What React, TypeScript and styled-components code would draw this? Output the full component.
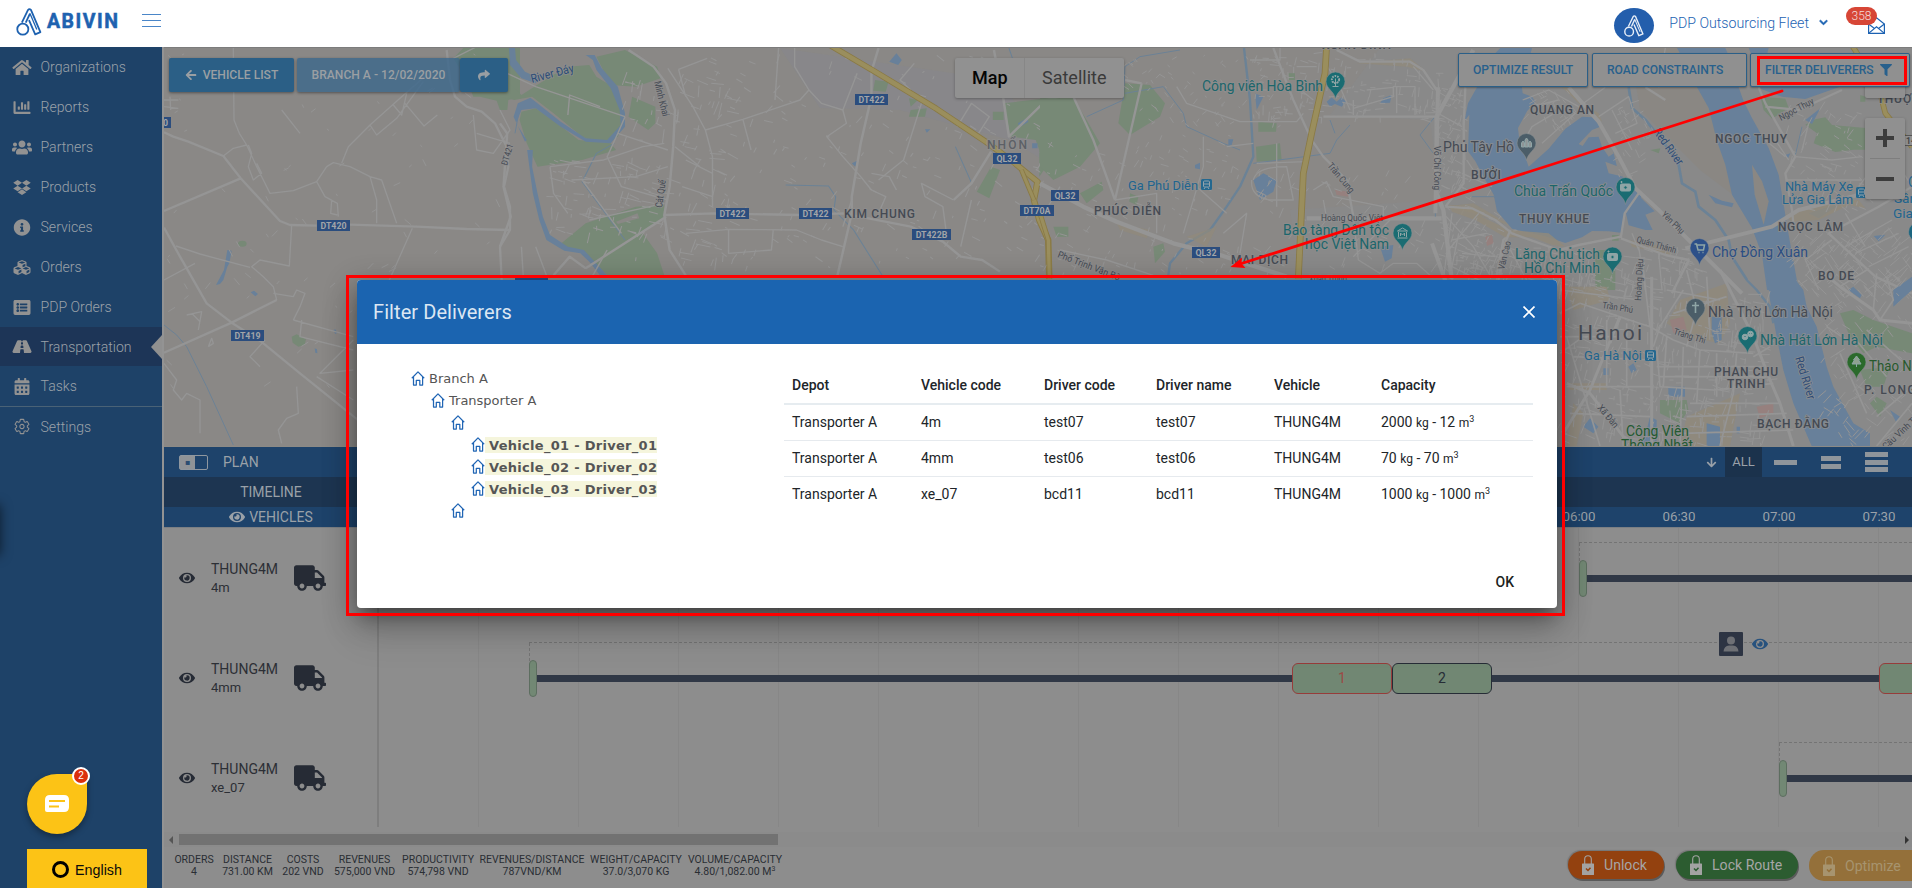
import React from 'react';
import styled, { createGlobalStyle } from 'styled-components';
import {
  FaHome, FaChartBar, FaUsers, FaDropbox, FaInfoCircle, FaCubes, FaListAlt, FaRoad,
  FaCalendarAlt, FaEye, FaTruck, FaArrowLeft, FaShare, FaFilter, FaArrowDown, FaChevronDown,
} from 'react-icons/fa';
import { IoSettingsOutline } from 'react-icons/io5';

const GlobalStyle = createGlobalStyle`
  *, *::before, *::after { box-sizing: border-box; }
  body { margin: 0; font-family: Roboto, "Liberation Sans", sans-serif; overflow: hidden; }
`;

const Page = styled.div`
  position: relative;
  display: flex;
  flex-direction: column;
  width: 1912px;
  height: 888px;
  overflow: hidden;
  background: #8d8d8d;
`;

/* ---------- header ---------- */
const Header = styled.header`
  display: flex;
  align-items: center;
  height: 47px;
  flex: none;
  background: #fff;
  padding: 0 27px 0 16px;
`;
const Logo = styled.div`
  height: 28px;
  margin-top: -4px;
`;
const Brand = styled.span`
  font: 700 19.5px Roboto, sans-serif;
  letter-spacing: 1.5px;
  -webkit-text-stroke: 0.5px #1e62b0;
  color: #1e62b0;
  width: 94px;
  margin: -4px 0 0 5px;
`;
const Burger = styled.div`
  display: flex;
  flex-direction: column;
  gap: 5px;
  margin-top: -6px;
  margin-left: 1px;
  flex: 1;
  i { width: 19px; height: 1px; background: #4a86c8; }
`;
const Avatar = styled.div`
  display: grid;
  place-items: center;
  width: 40px;
  height: 35px;
  border-radius: 50%;
  background: #235eac;
  margin-top: 4px;
`;
const Account = styled.span`
  display: flex;
  align-items: center;
  font-size: 14.2px;
  font-weight: 300;
  color: #1c62b2;
  margin: -2px 18px 0 15px;
  white-space: nowrap;
  svg { margin-left: 10px; stroke: #1c62b2; stroke-width: 40px; }
`;
const Mail = styled.div`
  position: relative;
  width: 39px;
  height: 30px;
  svg { position: absolute; right: 0; top: 8px; }
`;
const MailCount = styled.span`
  position: absolute;
  left: 0;
  top: -2px;
  width: 31px;
  height: 18px;
  border-radius: 9px;
  background: #d74636;
  color: #f3dcd9;
  font: 300 12px/18px Roboto, sans-serif;
  text-align: center;
  z-index: 1;
`;

const BrandMark = ({ color, w = 26, h = 28 }: { color: string; w?: number; h?: number }) => (
  <svg width={w} height={h} viewBox="0 0 78 86" fill="none" stroke={color} strokeWidth="5.5" strokeLinejoin="round">
    <circle cx="20" cy="65" r="17" />
    <path d="M17 45 L36 6 Q40 1 45 6 L74 74 L58 81 L39 37" />
    <path d="M29 45 L42 17" />
    <path d="M42 17 L63 66" strokeWidth="4" />
  </svg>
);

/* ---------- body / sidebar ---------- */
const Body = styled.div`
  display: flex;
  flex: 1;
  min-height: 0;
`;
const Sidebar = styled.nav`
  position: relative;
  width: 162px;
  flex: none;
  background: #1e4268;
`;
const NavItem = styled.a<{ $active?: boolean; $divided?: boolean }>`
  position: relative;
  display: flex;
  align-items: center;
  height: ${(p) => (p.$active ? 39 : 40)}px;
  padding-left: 12px;
  gap: 8.5px;
  font-size: 14.1px;
  font-weight: 300;
  color: #9aa1a8;
  background: ${(p) => (p.$active ? '#1d3557' : 'transparent')};
  border-top: ${(p) => (p.$divided ? '1px solid #4a6276' : '0')};
  svg { width: 20px; flex: none; color: #929292; }
  ${(p) => p.$active && `&::after {
    content: ''; position: absolute; right: 0; top: 8px; width: 0; height: 0;
    border: 12px solid transparent; border-left: 0; border-right: 11px solid #909090;
  }`}
`;
const EdgeGlow = styled.div`
  position: absolute;
  left: -20px;
  top: 456px;
  width: 20px;
  height: 50px;
  box-shadow: 0 2px 12px rgba(0, 0, 0, 0.6);
`;

const NAV: [React.ComponentType<{ size?: number }>, string][] = [
  [FaHome, 'Organizations'], [FaChartBar, 'Reports'], [FaUsers, 'Partners'], [FaDropbox, 'Products'],
  [FaInfoCircle, 'Services'], [FaCubes, 'Orders'], [FaListAlt, 'PDP Orders'], [FaRoad, 'Transportation'],
  [FaCalendarAlt, 'Tasks'], [IoSettingsOutline, 'Settings'],
];

const Main = styled.main`
  flex: 1;
  min-width: 0;
  display: flex;
  flex-direction: column;
  border-left: 2px solid #939393;
`;

/* ---------- map ---------- */
const MapArea = styled.section`
  position: relative;
  height: 400px;
  flex: none;
  overflow: hidden;
  border-top: 1px solid #7c7c7c;
  border-bottom: 1px solid #8c8a86;
  > svg { display: block; }
`;
const MapTop = styled.div`
  position: absolute;
  left: 5px;
  top: 10px;
  display: flex;
`;
const BlueButton = styled.button<{ $w: number; $soft?: boolean; $gap?: number }>`
  display: flex;
  align-items: center;
  justify-content: center;
  gap: 6px;
  width: ${(p) => p.$w}px;
  height: 34px;
  margin-right: ${(p) => p.$gap ?? 0}px;
  padding: 0;
  border: 0;
  border-radius: 2px;
  background: ${(p) => (p.$soft ? 'rgba(58, 103, 140, 0.78)' : '#2b5f86')};
  box-shadow: 0 1px 3px rgba(0, 0, 0, 0.4);
  color: #9a9fa3;
  font: 500 12.1px Roboto, sans-serif;
  white-space: nowrap;
`;
const MapType = styled.div`
  position: absolute;
  left: 791px;
  top: 10px;
  display: flex;
  height: 40px;
  border-radius: 2px;
  background: #919191;
  box-shadow: 0 1px 3px rgba(0, 0, 0, 0.3);
  font-size: 18px;
  line-height: 39px;
  color: #3a3a3a;
  b { width: 70px; padding-left: 17px; font-weight: 500; color: #050505; border-right: 1px solid #878787; }
  span { width: 99px; padding-left: 17px; }
`;
const MapActions = styled.div`
  position: absolute;
  left: 1294px;
  top: 5px;
  display: flex;
`;
const OutlineButton = styled.button<{ $w: number; $gap?: number; $pad?: number }>`
  display: flex;
  align-items: center;
  gap: 6px;
  width: ${(p) => p.$w}px;
  height: 34px;
  padding: 0 0 0 ${(p) => p.$pad ?? 14}px;
  margin-right: ${(p) => p.$gap ?? 0}px;
  border: 1px solid #2a5f88;
  border-radius: 2px;
  background: #909090;
  box-shadow: 0 1px 2px rgba(0, 0, 0, 0.35);
  color: #28608c;
  font: 500 12.1px Roboto, sans-serif;
  white-space: nowrap;
`;
const MapControl = styled.div<{ $top: number; $h: number }>`
  position: absolute;
  left: 1701px;
  top: ${(p) => p.$top}px;
  width: 40px;
  height: ${(p) => p.$h}px;
  border-radius: 2px;
  background: #909090;
  box-shadow: 0 1px 3px rgba(0, 0, 0, 0.3);
`;

type LabelSpec = { t: string; x: number; y: number; w: number; s?: number; c?: string; b?: boolean; r?: number };
const GREY = '#454a53';
const TEAL = '#1c666b';
const BLUE = '#1f658f';
const LABELS: LabelSpec[] = [
  { t: 'River Đáy', x: 532, y: 83, w: 44, s: 12, c: '#2c4c78', r: -15 },
  { t: 'Minh Khai', x: 654, y: 82, w: 36, s: 10, r: 76 },
  { t: 'Cát Quế', x: 662, y: 208, w: 28, s: 10, r: -82 },
  { t: 'ĐT421', x: 507, y: 166, w: 22, s: 9, r: -73 },
  { t: 'NHỔN', x: 987, y: 149, w: 40, s: 12, c: '#5c6066', b: true },
  { t: 'KIM CHUNG', x: 844, y: 218, w: 71, s: 12, b: true },
  { t: 'PHÚC DIỄN', x: 1094, y: 215, w: 67, s: 12, b: true },
  { t: 'Ga Phú Diễn', x: 1128, y: 190, w: 70, s: 13.5, c: BLUE },
  { t: 'MAI DỊCH', x: 1231, y: 264, w: 57, s: 12, b: true },
  { t: 'Phố Trịnh Văn Bô', x: 1057, y: 257, w: 66, s: 9.5, r: 21 },
  { t: 'Xuân Trung', x: 1309, y: 282, w: 38, s: 9.5 },
  { t: 'XUÂN ĐỈNH', x: 1322, y: 49, w: 69, s: 12, b: true },
  { t: 'Công viên Hòa Bình', x: 1202, y: 91, w: 121, s: 14, c: TEAL },
  { t: 'Trần Cung', x: 1327, y: 166, w: 36, s: 9.5, r: 50 },
  { t: 'Hoàng Quốc Việt', x: 1321, y: 221, w: 62, s: 9.5 },
  { t: 'Bảo tàng Dân tộc', x: 1283, y: 235, w: 106, s: 14, c: TEAL },
  { t: 'học Việt Nam', x: 1305, y: 249, w: 84, s: 14, c: TEAL },
  { t: 'Võ Chí Công', x: 1434, y: 146, w: 44, s: 9, r: 90 },
  { t: 'Phủ Tây Hồ', x: 1443, y: 152, w: 71, s: 14 },
  { t: 'BƯỞI', x: 1471, y: 179, w: 30, s: 12, b: true },
  { t: 'QUANG AN', x: 1530, y: 114, w: 64, s: 12, b: true },
  { t: 'Chùa Trấn Quốc', x: 1514, y: 196, w: 99, s: 14, c: TEAL },
  { t: 'THUY KHUE', x: 1519, y: 223, w: 70, s: 12, b: true },
  { t: 'Lăng Chủ tịch', x: 1515, y: 259, w: 85, s: 14, c: TEAL },
  { t: 'Hồ Chí Minh', x: 1524, y: 273, w: 76, s: 14, c: TEAL },
  { t: 'Văn Cao', x: 1504, y: 270, w: 29, s: 9, r: -76 },
  { t: 'Hoàng Diệu', x: 1641, y: 301, w: 42, s: 9, r: -87 },
  { t: 'Quán Thánh', x: 1636, y: 242, w: 41, s: 9, r: 16 },
  { t: 'Yên Phụ', x: 1661, y: 215, w: 28, s: 9, r: 44 },
  { t: 'Red River', x: 1653, y: 132, w: 42, s: 12, c: '#2c4c78', r: 54 },
  { t: 'NGOC THUY', x: 1715, y: 143, w: 72, s: 12, b: true },
  { t: 'Ngọc Thụy', x: 1781, y: 121, w: 38, s: 9.5, r: -28 },
  { t: 'THƯỢNG', x: 1877, y: 103, w: 52, s: 12, b: true },
  { t: 'Nhà Máy Xe', x: 1785, y: 191, w: 68, s: 13.5, c: BLUE },
  { t: 'Lửa Gia Lâm', x: 1782, y: 204, w: 71, s: 13.5, c: BLUE },
  { t: 'C', x: 1908, y: 187, w: 9, s: 14, c: BLUE },
  { t: 'Sân', x: 1894, y: 203, w: 23, s: 13.5, c: BLUE },
  { t: 'Gia', x: 1893, y: 218, w: 20, s: 13.5, c: BLUE },
  { t: 'NGỌC LÂM', x: 1778, y: 231, w: 65, s: 12, b: true },
  { t: 'Chợ Đồng Xuân', x: 1712, y: 257, w: 96, s: 14, c: '#2c4f84' },
  { t: 'BO DE', x: 1818, y: 280, w: 36, s: 12, b: true },
  { t: 'Trần Phú', x: 1602, y: 308, w: 31, s: 9, r: 9 },
  { t: 'Hanoi', x: 1578, y: 340, w: 64, s: 21 },
  { t: 'Ga Hà Nội', x: 1584, y: 360, w: 58, s: 13.5, c: BLUE },
  { t: 'Nhà Thờ Lớn Hà Nội', x: 1708, y: 317, w: 125, s: 14 },
  { t: 'Nhà Hát Lớn Hà Nội', x: 1760, y: 345, w: 123, s: 14, c: TEAL },
  { t: 'Tràng Thi', x: 1673, y: 334, w: 33, s: 9, r: 17 },
  { t: 'PHAN CHU', x: 1714, y: 376, w: 64, s: 12, b: true },
  { t: 'TRINH', x: 1727, y: 388, w: 38, s: 12, b: true },
  { t: 'Red River', x: 1795, y: 358, w: 44, s: 12, c: '#2c4c78', r: 73 },
  { t: 'Thảo Nguyên', x: 1869, y: 371, w: 78, s: 14, c: '#27592d' },
  { t: 'P. LONG BIEN', x: 1864, y: 394, w: 88, s: 12, b: true },
  { t: 'Xã Đàn', x: 1597, y: 408, w: 27, s: 9.5, r: 50 },
  { t: 'Công Viên', x: 1626, y: 436, w: 63, s: 14, c: '#235a32' },
  { t: 'Thống Nhất', x: 1621, y: 450, w: 72, s: 14, c: '#235a32' },
  { t: 'BẠCH ĐẰNG', x: 1757, y: 428, w: 72, s: 12, b: true },
  { t: 'Cầu Vĩnh Tuy', x: 1886, y: 450, w: 50, s: 9.5, r: -43 },
];

const SHIELDS: [string, number, number, number][] = [
  ['0', 160, 117, 11], ['DT420', 317, 220, 33], ['DT419', 231, 330, 33], ['DT422', 855, 94, 33], ['DT422', 716, 208, 33],
  ['DT422', 799, 208, 33], ['DT422B', 912, 229, 39], ['QL32', 993, 153, 28], ['QL32', 1051, 190, 28],
  ['DT70A', 1020, 205, 34], ['QL32', 1192, 247, 28], ['DT422', 515, 278, 33],
];

const PINS: [number, number, string, string][] = [
  [1335.5, 81.5, '#1a6c72', 'tree'], [1402.5, 233, '#1a6c72', 'museum'], [1526.5, 143, '#4b5d68', 'towers'],
  [1625.5, 187, '#1a6c72', 'camera'], [1612.5, 256.5, '#1a6c72', 'camera'], [1699.5, 248, '#2d5089', 'cart'],
  [1695.5, 308, '#4b5d68', 'cross'], [1747.5, 336, '#1a6c72', 'masks'], [1856.5, 362, '#2b6a2c', 'fir'],
  [1918, 232, '#1c6680', 'cross'],
];
const PIN_ART: Record<string, React.ReactNode> = {
  tree: <><circle cy="-2" r="3.6" strokeDasharray="1.6 1" strokeWidth="2" fill="none" /><path d="M0 -3V5M-3 5H3M0 2L-3 0M0 2L3 0" /></>,
  museum: <path d="M-5 -2L0 -5L5 -2ZM-4 -1V4M4 -1V4M-5 5H5M-2 3V0L0 2L2 0V3" />,
  towers: <path d="M-5 4V0L-3.5 -2L-2 0V4ZM-1.5 4V-3L0 -5L1.5 -3V4ZM2 4V0L3.5 -2L5 0V4Z" fill="#8f9496" />,
  camera: <><rect x="-5" y="-3" width="10" height="7" rx="1" fill="#8fa5a6" /><circle cy=".5" r="1.7" fill="#1a6c72" /><path d="M-5 -5H-3M-4 -6V-4" /></>,
  cart: <path d="M-5 -4H-3L-1.5 2H4L5 -3H-3M-1 4.5H0M3 4.5H4" fill="none" strokeWidth="1.5" />,
  cross: <path d="M0 -6V5M-3.5 -2.5H3.5" strokeWidth="1.6" />,
  masks: <><circle cx="-2.5" cy="1" r="2.8" fill="#8fa5a6" /><circle cx="3" cy="-2" r="2.8" fill="#8fa5a6" /><path d="M-3.5 .5H-3M-2 .5H-1.5M2 -2.5H2.5M3.5 -2.5H4" stroke="#1a6c72" /></>,
  fir: <path d="M0 -6L3 -2H2L4.5 2H-4.5L-2 -2H-3ZM0 2V5" fill="#8fa28f" />,
};

/* Small side streets: short strokes at repeatable pseudo-random places, thicker in town. */
const streets = (seed: number, n: number, x0: number, y0: number, w: number, h: number, angle: number, len: number) => {
  let s = seed;
  const rnd = () => { s = (s * 16807) % 2147483647; return s / 2147483647; };
  let d = '';
  for (let i = 0; i < n; i++) {
    const x = x0 + rnd() * w;
    const y = y0 + rnd() * h;
    const a = angle + (rnd() > 0.5 ? Math.PI / 2 : 0) + (rnd() - 0.5) * 0.5;
    const l = len * (0.3 + rnd());
    d += `M${x.toFixed(1)} ${y.toFixed(1)}l${(Math.cos(a) * l).toFixed(1)} ${(Math.sin(a) * l).toFixed(1)}`;
  }
  return d;
};

const Land = { green: '#778976', water: '#68809a', town: '#898989', sand: '#918a7a', road: '#959595', gold: '#9a8e5d', goldEdge: '#8a7a45' };

const Roads = ({ d, w = 4 }: { d: string; w?: number }) => (
  <path d={d} fill="none" stroke={Land.road} strokeWidth={w} strokeLinejoin="round" />
);
const Highway = ({ d, w = 14 }: { d: string; w?: number }) => (
  <g fill="none" strokeLinejoin="round">
    <path d={d} stroke={Land.goldEdge} strokeWidth={w + 5} />
    <path d={d} stroke={Land.gold} strokeWidth={w} />
  </g>
);
const Canal = ({ d, w = 3 }: { d: string; w?: number }) => (
  <path d={d} fill="none" stroke="#6b8296" strokeWidth={w} strokeLinejoin="round" />
);

const CityMap = () => (
  <svg width="1748" height="398" viewBox="164 48 1748 398" fontFamily="Roboto, sans-serif">
    <rect x="164" y="48" width="1748" height="398" fill="#8a8886" />
    <path d="M780 48L1000 80L1060 170L1010 140L900 110L820 108Z" fill="#87888b" opacity=".7" />
    <path d="M1380 48H1912V446H1540V290L1300 278L1290 210L1440 200L1430 120L1330 115Z" fill={Land.town} />
    <path d="M1630 48L1700 48L1760 150L1740 200L1700 170L1640 110Z" fill="#8a8783" />

    {/* western countryside */}
    <g transform="scale(.33333)">
      <path d="M1390 144H1560V290L1525 300L1522 330H1500L1490 302L1440 290L1420 290L1400 240L1360 175Z" fill={Land.green} />
      <ellipse cx="727" cy="731" rx="13" ry="9" fill={Land.green} />
      <path d="M875 1010L890 1003L918 1018L914 1035L895 1040L878 1028Z" fill={Land.green} />
      <path d="M682 750L695 752L688 790L682 800L670 840L660 852L648 855L672 810ZM752 877L762 872L774 882L766 889ZM1000 990L1006 988L1012 998L1006 1002ZM944 1045L951 1048L952 1060L946 1058Z" fill={Land.water} />
      <Canal d="M492 975L530 1005L560 1040L620 1160L700 1335M1545 400L1560 320" />
      <Roads w={7} d="M492 397L520 410L565 425L670 468L722 535L840 663L870 675L950 677M1050 674L1250 680L1400 687L1530 690M492 633L722 535M492 683L540 770L620 910L695 968L780 1022L900 1120L1080 1265M492 1058L695 968L770 930L830 900M1340 150L1350 240L1365 290L1400 320L1445 335L1485 370L1520 440L1525 500L1512 560L1530 620L1530 690L1500 740L1505 840" />
      <Roads w={4} d="M1360 175L1450 130M700 144L702 360L718 400L740 435L770 500L790 540L810 580L880 572L950 545L980 500L1000 488L1050 500L1110 530L1145 540L1190 670M670 468L700 445L740 435M1045 440L1110 375L1205 290L1280 225M1110 375L1130 405L1190 355L1270 245M1180 315L1205 345L1220 280M1215 310L1272 378L1312 345M1045 440L1025 490M875 675L868 798L780 780L755 800L790 830L820 860L830 900M528 738L600 762L750 802M1237 685L1168 840M492 840L585 790M1110 530L1130 600L1130 670M950 545L975 590L1012 610L1015 650M975 590L995 600L992 640L1012 645M745 435L755 460L745 500L760 540L785 520L770 490M492 1090L530 1140L520 1170L545 1200L560 1180L600 1200L600 1300M890 1160L895 1240L860 1255L835 1290L845 1330M845 330L900 400M1420 345L1430 450L1480 460L1530 390L1500 330M1430 400L1530 430M820 880L880 890L890 870L915 880L900 920L880 960M880 960L1060 1010M1060 1020L960 1120L1060 1110M950 1130L1060 1200M905 960L900 1010L1060 1050M795 1020L750 1070L780 1100M560 945L605 935L595 990M575 940L600 965M625 1040L635 1015L640 1030L625 1040M492 300L535 300M510 290L512 330M492 320L535 325" />
      <Roads w={3} d={streets(7, 90, 500, 160, 1000, 1000, 0.9, 20)} />
    </g>

    {/* Day river and the northern districts */}
    <g transform="translate(500 0) scale(.35714 .33333)">
      <path d="M0 230L25 250L60 285L140 230L190 200L250 195L270 230L330 270L350 350L330 410Q290 440 230 410L150 340L90 290L40 300L0 290ZM60 335L100 325L160 370L220 420L310 430L325 450L230 480L105 500L75 430L55 360ZM270 170L350 150L440 200L450 235L380 260L310 255ZM370 290L435 320L435 370L415 390L360 350ZM160 740L240 670L380 620L460 615L462 650L400 700L440 760L460 826L300 826L240 760ZM1410 310L1568 290V400L1510 450L1500 420L1430 410ZM1375 500L1400 510L1370 595L1335 575ZM1510 440L1568 400V440L1510 530ZM1050 240L1088 245L1080 275L1045 272ZM1145 295L1170 300L1150 320ZM1150 330L1195 325L1190 350H1145ZM1380 335H1410V360H1380Z" fill={Land.green} />
      <path d="M325 665L385 640L390 655L330 672Z" fill="#8a8886" />
      <path d="M25 144H42L45 180L70 215L110 235L100 250L60 235L28 195ZM240 165H265L285 205L330 260L350 340V380L310 430L240 425L170 380L100 325L60 330L45 370L75 420L70 425L38 350L50 310L85 293L105 310L170 365L240 415L300 420L338 375L335 330L310 265L270 210L260 180ZM76 450H92L90 500L105 580L120 650L140 705L190 740L235 750L265 785L300 826H280L250 785L225 760L180 752L130 720L110 660L92 580ZM1090 185L1110 160L1125 180L1115 195ZM1450 370L1475 355L1480 365L1455 382ZM985 490L1000 482L995 500ZM1190 388L1205 388L1195 398ZM1490 430H1505V445H1490Z" fill={Land.water} />
      <Canal d="M350 720L230 545L270 460L320 430M800 555L920 558L940 590L935 630L990 690L1070 826M1275 440L1320 548M1425 144L1435 175" />
      <Roads w={7} d="M1060 144L1040 215L1040 290L1010 430L985 590L985 640L945 826M460 645L600 640L840 645L960 640L1150 680L1240 725L1290 770L1350 780L1400 815M240 805L465 650M360 150L430 200L465 250L490 330L485 440L475 560L460 645L475 750L520 826M1383 150L1410 300L1425 410L1530 300L1568 290M1375 455L1320 550L1270 600M0 370L20 400L10 560L30 650L0 740M240 805L195 770L150 826" />
      <Roads w={4} d="M470 205L540 320L575 390L595 470V620M575 390L680 358L840 300L865 270L825 200V144M500 208L580 175M500 208L520 290M865 270L900 310L960 330L970 370L915 410L960 470L1010 530L1040 570M960 330L1000 220M680 358L703 450M20 220L100 260L350 350M190 345L195 285L280 320M140 500L290 480L400 440L460 430M140 500L150 580L190 640M230 540L340 700M1180 310L1130 480L1060 540M640 690V760L760 750L765 690M520 700L640 688L830 690L900 720L960 740M350 350L330 400L470 450M330 400L300 470L340 560L470 600M250 660L460 610M200 540L380 530L470 500M520 480L595 520M510 560L595 590M490 440L560 500M260 826L300 750M1160 190L1120 240L1150 270M1270 600L1180 550L1190 590L1240 620L1250 700M1040 570L1080 590L1060 640M1040 520L1090 530L1110 570M985 600L960 680M1280 380L1320 310L1370 350L1340 400M1320 600L1290 740M780 144L770 300M60 740L65 826M100 740L130 826" />
      <Roads w={3} d={streets(31, 120, 350, 200, 300, 600, 0.3, 34) + streets(43, 190, 560, 160, 980, 640, 0.5, 22) + streets(57, 70, 130, 480, 260, 220, 0.2, 30)} />
      <Highway w={13} d="M925 136L1050 215L1220 325L1360 425L1430 480L1505 545L1495 600L1510 660L1535 720L1538 836" />
      <Highway w={9} d="M1460 510L1495 600" />
    </g>

    {/* central districts */}
    <g transform="translate(1040 0) scale(.33333)">
      <path d="M0 295H100L140 360L180 430L120 500L40 540L0 500ZM255 250L330 255L375 310L360 350L270 405L235 370ZM648 440L720 430L725 480L650 485ZM655 365L710 370L708 395L655 395ZM120 580L185 545L190 570L140 610ZM745 220H765V240H745ZM340 740L370 730L375 755L345 790ZM40 680H85V710H50ZM270 580L295 590L290 615L268 605Z" fill={Land.green} />
      <path d="M640 540L670 520L710 540L700 575L660 600L650 570ZM860 305L875 292L890 305L905 292L918 305L905 320L885 312L870 320ZM1020 740L1060 735L1055 775L1035 785ZM1020 310L1030 295L1055 285L1050 308ZM465 495L480 488V508L465 505ZM565 418H580L575 435H565ZM645 280L670 290L650 330Z" fill={Land.water} />
      <Canal w={7} d="M612 144L630 300L640 470L600 560L560 620L510 690L440 730L390 790L385 826" />
      <Canal d="M255 280L370 260L430 340L440 380L550 430L600 450M640 490L870 460L890 420L930 375M870 360L885 400M140 350L250 300L255 200L300 170L420 150M1185 350L1140 405L1180 460" />
      <path d="M230 670L330 690L320 715L240 690ZM440 710L530 680L500 740ZM950 190L1110 175L1160 215L1100 200ZM1210 620L1300 610L1420 680L1300 640Z" fill={Land.sand} opacity=".7" />
      <path d="M885 570L930 575L925 590L890 585Z" fill="#96807e" />
      <Roads w={13} d="M0 550L130 620L230 665L400 730L540 765L740 830M1300 150L1240 260L1190 350V580L1210 630L1235 836M800 655H1205" />
      <Roads w={7} d="M305 250L225 600M100 290L160 420L225 600M305 250L255 240M700 144L760 300L815 420L850 470L920 540L940 650M850 350H1185M890 150L960 185H1110L1150 210L1190 270M1370 826L1390 720L1440 680" />
      <Roads w={4} d="M630 180H720V144M940 325L1060 290V260H1125V345M940 300V345M850 180L900 260L930 330M1070 260V340M980 270L1060 262M410 260L440 310L600 365H770L790 340M640 540Q650 500 740 500L760 600H690Q630 590 635 540M650 490L800 485M710 430V620M490 410V500L430 700M820 570L860 545L880 590L1030 620V650M955 780L1020 820L1060 790H1130L1170 826M940 770L1050 660M940 650L955 780M1120 200L1180 270M1300 330L1340 420M1270 360L1275 480M1280 480L1320 540M0 660L60 560M60 750L200 780L340 826M550 700L620 640L600 760M225 600L350 580V700M470 560L560 640M560 440L640 430M850 600L860 655M1210 640L1300 740L1350 826M1235 720L1340 700M770 200H830M770 260L820 300" />
      <Roads w={3} d={streets(71, 130, 10, 400, 600, 420, 0.4, 20) + streets(83, 150, 640, 160, 560, 200, 0.1, 24) + streets(97, 110, 640, 500, 760, 320, 0.5, 26) + streets(101, 70, 250, 160, 500, 220, 0.8, 16)} />
      <Highway w={15} d="M860 136L855 220L815 400L790 520L775 836" />
      <Highway w={10} d="M0 640L25 720L28 836" />
    </g>

    {/* West Lake and the Red River */}
    <g transform="translate(1432 0) scale(.33333)">
      <path d="M985 290L1060 296L1070 324L1020 356L995 330ZM1120 374L1150 358L1180 352L1200 375L1300 384V449H1265L1210 456L1145 430L1155 400ZM490 750H550V870H490ZM540 705H560V722H540ZM655 450L685 445L680 460ZM1285 285L1300 290V305H1285Z" fill={Land.green} />
      <path d="M205 144H300L270 262L272 280L300 290L310 305L285 334L258 384L262 420L290 500L350 446L400 386L450 350L480 352L515 385L540 440L555 500L585 550L620 575L628 592L578 640L566 698L530 694L480 693L450 712L400 729L340 709L240 686L195 634L185 584L160 540L130 484L108 454L112 344L97 364L108 310L135 262L150 200Z" fill={Land.water} />
      <path d="M440 432L480 390L505 380L522 388L545 460L530 470L510 440L500 410L470 412L452 438ZM520 485L560 500L575 530L530 520Z" fill={Land.town} />
      <path d="M735 144H880L905 200L920 262L935 304L960 354L1010 444L1040 524L1050 584L1060 644L1070 704L1100 870H1005L990 764L960 684L900 584L880 494L855 424L830 324L795 262L760 190ZM950 144H1010L990 220L975 200ZM985 240H1260L1220 262L1120 297L1050 290L985 266ZM618 585L668 634L640 644L662 690H640L590 676L582 640ZM830 584L870 602L905 610L900 622L850 610ZM1120 360L1165 325L1140 372ZM1060 465L1075 460L1068 475ZM1325 708L1360 704L1340 724ZM1130 640L1190 620L1230 610L1160 655Z" fill={Land.water} />
      <path d="M960 494L990 544L1010 604L995 674L968 584Z" fill="#8a8783" />
      <Canal w={8} d="M590 262L600 324L640 359L700 434L740 494L750 550L790 575L800 620L850 660L890 720L900 770L945 840" />
      <Canal d="M15 300L10 650M1090 465L1110 380M190 590L120 590" />
      <path d="M50 615L120 622L150 650L230 690L350 700L400 740L360 735L300 712L220 712L130 660L60 635ZM590 720L700 740L720 765L600 740ZM1060 645L1200 600L1280 600L1300 625L1250 615L1160 660L1080 665ZM390 262L420 262L440 300L500 340L510 365L440 310Z" fill={Land.sand} opacity=".8" />
      <path d="M160 710L180 705L185 730L165 738Z" fill="#96807e" />
      <Roads w={12} d="M410 262L500 365L560 470L610 565L680 630L770 720L850 800L930 880M0 730L50 870M18 262L10 640M760 745L1020 680L1100 630L1260 590L1330 570" />
      <Roads w={7} d="M620 580L578 640L567 710L440 735L380 750L300 722L240 700L190 660L120 625L40 620M567 715L700 765L770 780L720 880M980 262L1000 310L1090 470L1060 520L1080 630L1085 680M1000 320L1100 330L1230 270M1190 700L1330 830L1440 880M1190 700L1340 620L1440 560M235 690L215 740L195 870M640 262L700 300M100 262L95 380L95 550L40 620" />
      <Roads w={4} d="M272 300L350 270L440 320L520 262M272 430L300 380L400 320L430 340L330 430M300 320L380 300M440 320L500 360M1200 720L1120 780L1160 870M1240 740L1380 660M1270 760L1400 700M1310 800L1430 740M1070 480L1030 420M1090 470L1200 480L1290 470M1060 540L1290 540M1240 640L1300 740M80 700L60 800L160 850M90 760L190 770M140 640L90 700L50 750M230 740L300 870M350 740L370 870M450 750L440 870M620 740L640 870M680 760L690 870M90 520L180 560M0 330L90 380M500 350L590 290L615 370L550 400M540 330L600 450M30 870L60 640M700 144L680 262M600 700L620 750M1280 560L1340 480M1390 480L1440 560M1130 370L1110 450M1000 420L1060 470" />
      <Roads w={3} d={streets(113, 90, 10, 262, 85, 300, 0.4, 24) + streets(117, 70, 10, 650, 190, 170, 0.4, 24) + streets(127, 190, 60, 740, 740, 130, 0.2, 34) + streets(131, 90, 1070, 300, 230, 330, 0.5, 26) + streets(139, 150, 1090, 680, 350, 200, 0.8, 44) + streets(151, 40, 560, 300, 100, 240, 1, 22) + streets(157, 40, 290, 270, 130, 110, 1, 24)} />
      <Highway w={12} d="M1260 136L1340 262L1360 340L1440 440" />
    </g>

    {/* old quarter, south east */}
    <g transform="translate(1540 270) scale(.33333)">
      <path d="M900 130L940 120L1000 150L1116 190V250L1010 230L970 250L930 200ZM960 300L1050 290L1030 350H980ZM360 390H440L445 420L420 460L360 430ZM180 0H210L215 50H185ZM1010 380L1040 400L1020 440L990 400Z" fill={Land.green} />
      <path d="M420 90L560 40L570 160L540 220L440 200L380 160ZM440 440L600 370L570 528H420ZM80 50H200L210 90L100 120ZM80 340L200 340L200 360L90 360ZM100 400L130 430L110 528H80Z" fill={Land.sand} opacity=".8" />
      <path d="M390 150L430 140L440 180L400 190ZM650 410L700 400V430L660 445Z" fill="#96807e" />
      <path d="M680 0H745L790 60L800 110L830 170L860 290L880 350L940 460L990 490V528H815L790 470L760 400L730 300L710 200L690 90ZM515 140H545V210L525 220L515 190ZM385 350H435V380H385ZM130 470L150 445L175 470L160 490ZM330 440L350 450V528H300L320 480ZM500 460L540 470V528H500ZM190 295H205V315H190ZM265 290L280 280L290 300L275 310ZM925 60L940 50L965 75L960 85ZM1060 60L1116 20V60L1060 110ZM1050 420L1080 440L1070 460ZM590 470H600V490H590Z" fill={Land.water} />
      <Canal w={7} d="M620 30L650 60L690 110L700 160" />
      <Roads w={9} d="M335 20V528M540 0L590 100L640 200L690 330L720 400L760 528M840 0L900 50L1000 120L1020 150L1116 160M80 340L150 370L250 500L300 528M70 490L150 360L240 140" />
      <Roads w={5} d="M60 130L120 100L240 140L330 170L400 210L480 240L640 250M310 0L330 170M80 350H340M350 230L360 350L520 360L700 340M430 60L360 170L340 230M60 60L300 90M60 200H240M200 150V350M260 160V350M100 260L340 270M380 200L370 350M430 230L420 528M480 240L470 400M530 250V380M590 250L580 370L540 528M350 290L680 290M360 320L690 320M450 400L720 400M440 440L740 430M430 490L760 480M380 60L540 90M440 0L470 120L440 230M500 20L510 180M560 80L400 130M640 260L690 230M80 200L180 528M90 430L330 440M240 360L250 528M130 200L60 250M1020 150L1060 90L1040 20M900 50L980 0M1000 120L1010 10M940 200L1040 320M980 180L1116 300M1010 440L1116 350M1116 400L1010 528M860 170L950 230M900 250L980 430" />
      <Roads w={3} d={streets(163, 190, 60, 20, 300, 500, 0.25, 30) + streets(173, 220, 350, 60, 340, 460, 0.15, 34) + streets(181, 120, 850, 20, 260, 500, 0.8, 30)} />
    </g>

    {SHIELDS.map(([t, x, y, w], i) => (
      <g key={i}>
        <rect x={x} y={y} width={w} height="11" fill="#2b4d7e" />
        <text x={x + w / 2} y={y + 8.8} textAnchor="middle" fontSize="8.8" fontWeight="700" fill="#a2a5a8">{t}</text>
      </g>
    ))}
    <rect x="1904.5" y="135.5" width="20" height="10" fill="#919191" stroke="#555" />
    <text x="1906" y="144" fontSize="8.5" fontWeight="700" fill="#444">14</text>
    {[[1201, 179], [1856, 187], [1645, 350]].map(([x, y]) => (
      <g key={x} transform={`translate(${x} ${y})`}>
        <rect width="11" height="11" rx="1.5" fill="#24688f" />
        <rect x="2.5" y="2" width="6" height="6" rx="1" fill="none" stroke="#93a3ac" />
        <path d="M3 5H8M3 10L4 8.500M8 10L7 8.500" stroke="#93a3ac" />
      </g>
    ))}
    {PINS.map(([x, y, c, art], i) => (
      <g key={i} transform={`translate(${x} ${y})`}>
        <path d="M0 17.500C-1 10 -9.500 7 -9.500 0A9.500 9.500 0 0 1 9.500 0C9.500 7 1 10 0 17.500Z" fill={c} stroke="#8a8f90" strokeWidth=".6" />
        <g stroke="#8fa5a6" fill="none" strokeWidth="1">{PIN_ART[art]}</g>
      </g>
    ))}
    {LABELS.map((l, i) => (
      <text
        key={i}
        transform={`translate(${l.x} ${l.y}) rotate(${l.r ?? 0})`}
        textLength={l.w}
        lengthAdjust={l.b || l.t === 'Hanoi' ? 'spacing' : 'spacingAndGlyphs'}
        fontSize={l.s ?? 12}
        fontWeight={l.b ? 500 : 400}
        fill={l.c ?? GREY}
        stroke="#8e8e8e"
        strokeWidth="2"
        strokeOpacity=".8"
        strokeLinejoin="round"
        paintOrder="stroke"
      >
        {l.t}
      </text>
    ))}
  </svg>
);

/* ---------- timeline ---------- */
const Bar = styled.div<{ $h: number; $dark?: boolean }>`
  display: flex;
  align-items: center;
  height: ${(p) => p.$h}px;
  flex: none;
  background: ${(p) => (p.$dark ? '#1d3551' : '#1e436b')};
  color: #9aa1a8;
  font-size: 14px;
`;
const Toggle = styled.div`
  width: 29px;
  height: 15px;
  margin: 0 15px;
  border: 1px solid #8f979f;
  border-radius: 2px;
  display: flex;
  &::before {
    content: '▪';
    width: 15px;
    background: #8f9397;
    color: #2b4d72;
    font: 8px/13px "DejaVu Sans", sans-serif;
    text-align: center;
  }
`;
const PlanTitle = styled.span`flex: 1;`;
const AllTab = styled.span`
  width: 37px;
  margin: 0 12px 0 8px;
  line-height: 30px;
  font-size: 13px;
  text-align: center;
  background: #1b324c;
`;
const Density = styled.span<{ $w: number; $mr: number; $gap: number }>`
  display: flex;
  flex-direction: column;
  gap: ${(p) => p.$gap}px;
  width: ${(p) => p.$w}px;
  margin-right: ${(p) => p.$mr}px;
  i { height: 5px; background: #8f959b; }
`;
const HeadCell = styled.span`
  display: flex;
  align-items: center;
  justify-content: center;
  gap: 4px;
  width: 214px;
  flex: none;
`;
const Ticks = styled.div`
  flex: 1;
  display: flex;
  overflow: hidden;
  padding: 0 0 1px 51px;
  span { width: 100px; flex: none; text-align: center; font-size: 13.3px; }
`;
const Rows = styled.div`
  height: 300px;
  flex: none;
  overflow: hidden;
  border-top: 1px solid #7b7f84;
`;
const Row = styled.div`
  display: flex;
  height: 100px;
`;
const VehicleCell = styled.div`
  display: flex;
  align-items: center;
  width: 215px;
  flex: none;
  padding: 0 0 0 15px;
  border-right: 2px solid #7e7e7e;
  color: #262b35;
  > svg { flex: none; }
`;
const VehicleName = styled.div`
  width: 83px;
  margin-left: 16px;
  font-size: 14px;
  line-height: 19px;
  color: #2c2f35;
  small { display: block; font-size: 13px; line-height: 17px; }
`;
const Lane = styled.div`
  flex: 1;
  min-width: 0;
  overflow: hidden;
  background: repeating-linear-gradient(90deg, transparent 0 99px, #878787 99px 100px);
`;
const Route = styled.div<{ $start: number }>`
  position: relative;
  display: flex;
  align-items: center;
  height: 55px;
  margin: 14px 0 0 ${(p) => p.$start}px;
  padding-top: 17px;
  border-top: 1px dashed #747474;
  &::before {
    content: '';
    position: absolute;
    left: 0;
    top: 0;
    height: 18px;
    border-left: 1px dashed #747474;
  }
`;
const Depot = styled.span`
  width: 8px;
  height: 37px;
  flex: none;
  border: 1px solid #5d6e60;
  border-radius: 4px;
  background: #728874;
`;
const Leg = styled.span<{ $w?: number }>`
  flex: ${(p) => (p.$w ? 'none' : 1)};
  width: ${(p) => p.$w ?? 0}px;
  height: 7px;
  background: #303846;
`;
const Stop = styled.span<{ $late?: boolean }>`
  width: 100px;
  height: 31px;
  flex: none;
  border: 1px solid ${(p) => (p.$late ? '#963c3a' : '#262c36')};
  border-radius: 6px;
  background: #718773;
  color: ${(p) => (p.$late ? '#9b4a45' : '#262c36')};
  font-size: 14px;
  line-height: 28px;
  text-align: center;
`;
const DriverTag = styled.div`
  position: absolute;
  left: 1190px;
  top: -11px;
  display: flex;
  align-items: center;
  gap: 9px;
  color: #27527e;
`;
const ScrollTrack = styled.div`
  display: flex;
  align-items: center;
  justify-content: space-between;
  height: 15px;
  margin-top: 5px;
  padding: 0 3px 0 5px;
  flex: none;
  background: #8b8b8b;
`;
const ScrollThumb = styled.div`
  width: 599px;
  height: 11px;
  margin: 0 auto 0 6px;
  background: #727272;
`;
const Footer = styled.footer`
  display: flex;
  height: 41px;
  padding: 0 0 0 11px;
`;
const Stat = styled.div<{ $w: number }>`
  display: flex;
  flex-direction: column;
  align-items: center;
  width: ${(p) => p.$w}px;
  flex: none;
  padding-top: 7px;
  font-size: 10.5px;
  line-height: 12px;
  white-space: nowrap;
  color: #2a2e34;
  sup { font-size: 7px; line-height: 0; }
`;
const FooterActions = styled.div`
  display: flex;
  align-items: flex-start;
  margin-left: auto;
  margin-right: -16px;
  padding-top: 4px;
`;
const Pill = styled.button<{ $w: number; $bg: string; $flat?: boolean; $mr: number }>`
  display: flex;
  align-items: center;
  gap: 10px;
  width: ${(p) => p.$w}px;
  height: ${(p) => (p.$flat ? 31 : 28)}px;
  margin: ${(p) => (p.$flat ? '-1px' : '0')} ${(p) => p.$mr}px 0 0;
  padding: 0 0 0 14px;
  border: 0;
  border-radius: 15px;
  background: ${(p) => p.$bg};
  box-shadow: ${(p) => (p.$flat ? 'none' : '1px 2px 0 #5b5b5b, -1px -1px 1px #767676')};
  color: ${(p) => (p.$flat ? '#a7946f' : '#a6a6a6')};
  font: 400 14.1px Roboto, sans-serif;
  white-space: nowrap;
`;

const PadLock = ({ tick, fill = '#a3a3a3' }: { tick: string; fill?: string }) => (
  <svg width="12" height="20" viewBox="0 0 12 20">
    <path d="M2.700 9V4Q2.700 .7 6 .7Q9.300 .7 9.300 4V9" fill="none" stroke={fill} strokeWidth="1.100" />
    <rect x="0" y="8.500" width="12" height="11.500" rx=".5" fill={fill} />
    <path d="M4 13.500L6 15.500L8.500 12.700" fill="none" stroke={tick} strokeWidth="1.500" />
  </svg>
);

const STATS: [string, React.ReactNode, number][] = [
  ['ORDERS', '4', 38], ['DISTANCE', '731.00 KM', 69], ['COSTS', '202 VND', 42], ['REVENUES', '575,000 VND', 81],
  ['PRODUCTIVITY', '574,798 VND', 66], ['REVENUES/DISTANCE', '787VND/KM', 122], ['WEIGHT/CAPACITY', '37.0/3,070 KG', 86],
  ['VOLUME/CAPACITY', <>4.80/1,082.00 M<sup>3</sup></>, 112],
];

/* ---------- dialog ---------- */
const Dialog = styled.div`
  position: absolute;
  left: 357px;
  top: 280px;
  width: 1200px;
  height: 328px;
  display: flex;
  flex-direction: column;
  border-radius: 4px;
  overflow: hidden;
  background: #fff;
`;
const DialogShadow = styled.div`
  position: absolute;
  left: 357px;
  top: 280px;
  width: 1200px;
  height: 328px;
  border-radius: 4px;
  box-shadow: 0 11px 15px -7px rgba(0, 0, 0, 0.35), 0 9px 30px 4px rgba(0, 0, 0, 0.3), 0 24px 38px 3px rgba(0, 0, 0, 0.1);
`;
const DialogHead = styled.div`
  display: flex;
  align-items: center;
  justify-content: space-between;
  height: 64px;
  flex: none;
  padding: 0 22px 0 16px;
  background: #1b64b0;
  color: #dbe7f3;
  font-size: 20px;
  letter-spacing: 0.08px;
`;
const DialogBody = styled.div`
  display: flex;
  flex: 1;
`;
const Tree = styled.div`
  width: 427px;
  flex: none;
  padding: 24px 0 0 54px;
  font: 13px "DejaVu Sans", sans-serif;
  color: #555;
`;
const TreeRow = styled.div<{ $depth: number }>`
  display: flex;
  align-items: center;
  height: 22px;
  padding-left: ${(p) => p.$depth * 20}px;
  svg { margin-top: -2px; }
  span { height: 16px; line-height: 16px; padding-left: 4px; white-space: nowrap; }
  mark { height: 16px; line-height: 17px; padding-left: 4px; font-weight: 700; letter-spacing: 0.29px; color: inherit; background: #f5f5dc; white-space: nowrap; }
`;
const Side = styled.div`
  flex: 1;
  display: flex;
  flex-direction: column;
  padding: 23px 24px 0 0;
`;
const Grid = styled.div`
  display: grid;
  grid-template-columns: 129px 123px 112px 118px 107px 1fr;
`;
const Cell = styled.div<{ $head?: boolean; $last?: boolean }>`
  height: ${(p) => (p.$head ? 38 : 36)}px;
  line-height: ${(p) => (p.$head ? 36 : 34)}px;
  padding-left: 8px;
  font-size: 14px;
  font-weight: ${(p) => (p.$head ? 500 : 400)};
  color: #212529;
  border-bottom: ${(p) => (p.$head ? '2px solid #e6ecf0' : p.$last ? '0' : '1px solid #e6eaee')};
  small { font-size: 12px; }
  sup { font-size: 9px; line-height: 0; }
`;
const OkButton = styled.button`
  align-self: flex-end;
  margin: 53px 11px 0 0;
  padding: 8px;
  border: 0;
  background: none;
  color: #1c1f22;
  font: 500 14px Roboto, sans-serif;
`;

const HouseIcon = () => (
  <svg width="14" height="15" viewBox="0 0 14 15" fill="none" stroke="#2065b4" strokeWidth="1.25" strokeLinejoin="round">
    <path d="M.8 7.200L7 .9L13.200 7.200" />
    <path d="M2.500 6V14H5.300V9.300H8.800V14H11.600V6" />
  </svg>
);

const TREE: [number, string, boolean][] = [
  [0, 'Branch A', false], [1, 'Transporter A', false], [2, '', false], [3, 'Vehicle_01 - Driver_01', true],
  [3, 'Vehicle_02 - Driver_02', true], [3, 'Vehicle_03 - Driver_03', true], [2, '', false],
];
const HEADS = ['Depot', 'Vehicle code', 'Driver code', 'Driver name', 'Vehicle', 'Capacity'];
const DELIVERERS = [
  ['Transporter A', '4m', 'test07', 'test07', 'THUNG4M', '2000', '12'],
  ['Transporter A', '4mm', 'test06', 'test06', 'THUNG4M', '70', '70'],
  ['Transporter A', 'xe_07', 'bcd11', 'bcd11', 'THUNG4M', '1000', '1000'],
];

/* ---------- annotations and floating widgets ---------- */
const Frame = styled.div<{ $x: number; $y: number; $w: number; $h: number }>`
  position: absolute;
  left: ${(p) => p.$x}px;
  top: ${(p) => p.$y}px;
  width: ${(p) => p.$w}px;
  height: ${(p) => p.$h}px;
  border: 3px solid #f00;
`;
const ArrowLayer = styled.svg`
  position: absolute;
  left: 0;
  top: 0;
`;
const ChatBubble = styled.div`
  position: absolute;
  left: 27px;
  top: 774px;
  width: 60px;
  height: 60px;
  display: grid;
  place-items: center;
  border-radius: 30px 0 30px 30px;
  background: #fcc316;
  box-shadow: 0 3px 6px rgba(0, 0, 0, 0.35);
`;
const ChatCount = styled.span`
  position: absolute;
  right: -3px;
  top: -7px;
  width: 18px;
  height: 18px;
  border: 2px solid #fff;
  border-radius: 50%;
  background: #db2f0c;
  color: #fff;
  font: 10px/14px "Liberation Sans", sans-serif;
  text-align: center;
`;
const Language = styled.div`
  position: absolute;
  left: 27px;
  top: 849px;
  width: 120px;
  height: 39px;
  display: flex;
  align-items: center;
  justify-content: center;
  gap: 6px;
  padding-top: 2px;
  background: #fcc316;
  color: #0b0b0b;
  font: 14.3px "Liberation Sans", sans-serif;
  &::before {
    content: '';
    width: 17px;
    height: 17px;
    border: 3px solid #000;
    border-radius: 50%;
  }
`;

const VEHICLES = ['4m', '4mm', 'xe_07'];
const TICKS = ['00:30', '01:00', '01:30', '02:00', '02:30', '03:00', '03:30', '04:00', '04:30', '05:00', '05:30', '06:00', '06:30', '07:00', '07:30'];

export default function App() {
  return (
    <Page>
      <GlobalStyle />
      <Header>
        <Logo><BrandMark color="#1e62b0" /></Logo>
        <Brand>ABIVIN</Brand>
        <Burger><i /><i /><i /></Burger>
        <Avatar><BrandMark color="#e8eff8" w={22} h={22} /></Avatar>
        <Account>PDP Outsourcing Fleet<FaChevronDown size={9} /></Account>
        <Mail>
          <MailCount>358</MailCount>
          <svg width="17" height="17" viewBox="0 0 17 17" fill="none" stroke="#1c62b2" strokeWidth="1.200">
            <path d="M.6 7L8.500 .8L16.400 7V16.400H.6Z" />
            <path d="M.6 7L6.500 11.500M16.400 7L10.500 11.500M.6 16.400L8.500 9.800L16.400 16.400" />
          </svg>
        </Mail>
      </Header>
      <Body>
        <Sidebar>
          {NAV.map(([Icon, label]) => (
            <NavItem key={label} $active={label === 'Transportation'} $divided={label === 'Settings'}>
              <Icon size={17} />{label}
            </NavItem>
          ))}
          <EdgeGlow />
        </Sidebar>
        <Main>
          <MapArea>
            <CityMap />
            <MapTop>
              <BlueButton $w={125} $gap={3}><FaArrowLeft size={12} />VEHICLE LIST</BlueButton>
              <BlueButton $w={163} $soft>BRANCH A - 12/02/2020</BlueButton>
              <BlueButton $w={48}><FaShare size={12} /></BlueButton>
            </MapTop>
            <MapType><b>Map</b><span>Satellite</span></MapType>
            <MapControl $top={10} $h={40} />
            <MapActions>
              <OutlineButton $w={130} $gap={4}>OPTIMIZE RESULT</OutlineButton>
              <OutlineButton $w={155} $gap={3}>ROAD CONSTRAINTS</OutlineButton>
              <OutlineButton $w={160}>FILTER DELIVERERS<FaFilter size={12} /></OutlineButton>
            </MapActions>
            <MapControl $top={70} $h={81}>
              <svg width="40" height="81" viewBox="0 0 40 81" stroke="#3c3c3c" strokeWidth="4">
                <path d="M11 20H29M20 11V29M11 61H29" />
                <path d="M5 40.500H35" stroke="#7e7e7e" strokeWidth="1" />
              </svg>
            </MapControl>
          </MapArea>
          <Bar $h={30}>
            <Toggle /><PlanTitle>PLAN</PlanTitle>
            <FaArrowDown size={11} />
            <AllTab>ALL</AllTab>
            <Density $w={23} $mr={24} $gap={0}><i /></Density>
            <Density $w={20} $mr={24} $gap={3}><i /><i /></Density>
            <Density $w={23} $mr={24} $gap={2.5}><i /><i /><i /></Density>
          </Bar>
          <Bar $h={30} $dark><HeadCell>TIMELINE</HeadCell></Bar>
          <Bar $h={20}>
            <HeadCell><FaEye size={16} />VEHICLES</HeadCell>
            <Ticks>{TICKS.map((t) => <span key={t}>{t}</span>)}</Ticks>
          </Bar>
          <Rows>
            {VEHICLES.map((v) => (
              <Row key={v}>
                <VehicleCell>
                  <FaEye size={16} />
                  <VehicleName>THUNG4M<small>{v}</small></VehicleName>
                  <FaTruck size={32} />
                </VehicleCell>
                <Lane>
                  {v === '4m' && <Route $start={1200}><Depot /><Leg /></Route>}
                  {v === '4mm' && (
                    <Route $start={150}>
                      <Depot /><Leg $w={755} /><Stop $late>1</Stop><Stop>2</Stop><Leg $w={387} /><Stop $late />
                      <DriverTag>
                        <svg width="24" height="24" viewBox="0 0 24 24">
                          <rect width="24" height="24" rx="1" fill="#2d3443" />
                          <circle cx="12" cy="8.500" r="4" fill="#6e7075" />
                          <path d="M4.500 19.500Q5 14 10 13.500H14Q19 14 19.500 19.500Z" fill="#6e7075" />
                        </svg>
                        <FaEye size={16} />
                      </DriverTag>
                    </Route>
                  )}
                  {v === 'xe_07' && <Route $start={1400}><Depot /><Leg /></Route>}
                </Lane>
              </Row>
            ))}
          </Rows>
          <ScrollTrack>
            <svg width="4" height="8"><path d="M4 0V8L0 4Z" fill="#555" /></svg>
            <ScrollThumb />
            <svg width="4" height="8"><path d="M0 0V8L4 4Z" fill="#333" /></svg>
          </ScrollTrack>
          <Footer>
            {STATS.map(([k, v, w]) => <Stat key={k} $w={w}><span>{k}</span><span>{v}</span></Stat>)}
            <FooterActions>
              <Pill $w={96} $mr={12} $bg="#93410f"><PadLock tick="#93410f" />Unlock</Pill>
              <Pill $w={122} $mr={11} $bg="#2c5c30"><PadLock tick="#2c5c30" />Lock Route</Pill>
              <Pill $w={119} $mr={0} $bg="#94703a" $flat><PadLock tick="#94703a" fill="#a7946f" />Optimize</Pill>
            </FooterActions>
          </Footer>
        </Main>
      </Body>

      <DialogShadow />
      <Dialog>
        <DialogHead>
          Filter Deliverers
          <svg width="12" height="12" viewBox="0 0 12 12" stroke="#fff" strokeWidth="1.700"><path d="M.5 .5L11.500 11.500M11.500 .5L.5 11.500" /></svg>
        </DialogHead>
        <DialogBody>
          <Tree>
            {TREE.map(([depth, label, picked], i) => (
              <TreeRow key={i} $depth={depth}>
                <HouseIcon />
                {picked ? <mark>{label}</mark> : <span>{label}</span>}
              </TreeRow>
            ))}
          </Tree>
          <Side>
            <Grid>
              {HEADS.map((h) => <Cell key={h} $head>{h}</Cell>)}
              {DELIVERERS.map((row, r) => row.slice(0, 6).map((c, i) => (
                <Cell key={`${r}-${i}`} $last={r === 2}>
                  {i < 5 ? c : <>{c} <small>kg</small> - {row[6]} <small>m<sup>3</sup></small></>}
                </Cell>
              )))}
            </Grid>
            <OkButton>OK</OkButton>
          </Side>
        </DialogBody>
      </Dialog>

      <Frame $x={346} $y={275} $w={1219} $h={341} />
      <Frame $x={1757} $y={56} $w={150} $h={29} />
      <ArrowLayer width="1912" height="300">
        <path d="M1782 91L1240 264" stroke="#f00" strokeWidth="2.800" strokeLinecap="round" />
        <path d="M1230.500 267L1242 257.500L1241.500 263.500L1245.500 268Z" fill="#f00" />
      </ArrowLayer>

      <ChatBubble>
        <ChatCount>2</ChatCount>
        <svg width="24" height="18" viewBox="0 0 24 18">
          <path d="M5 0H19Q24 0 24 5V12Q24 17 19 17H2Q0 17 0 15V5Q0 0 5 0Z" fill="#fff" />
          <path d="M4 6H20M4 11.500H14" stroke="#fcc316" strokeWidth="2" />
        </svg>
      </ChatBubble>
      <Language>English</Language>
    </Page>
  );
}
